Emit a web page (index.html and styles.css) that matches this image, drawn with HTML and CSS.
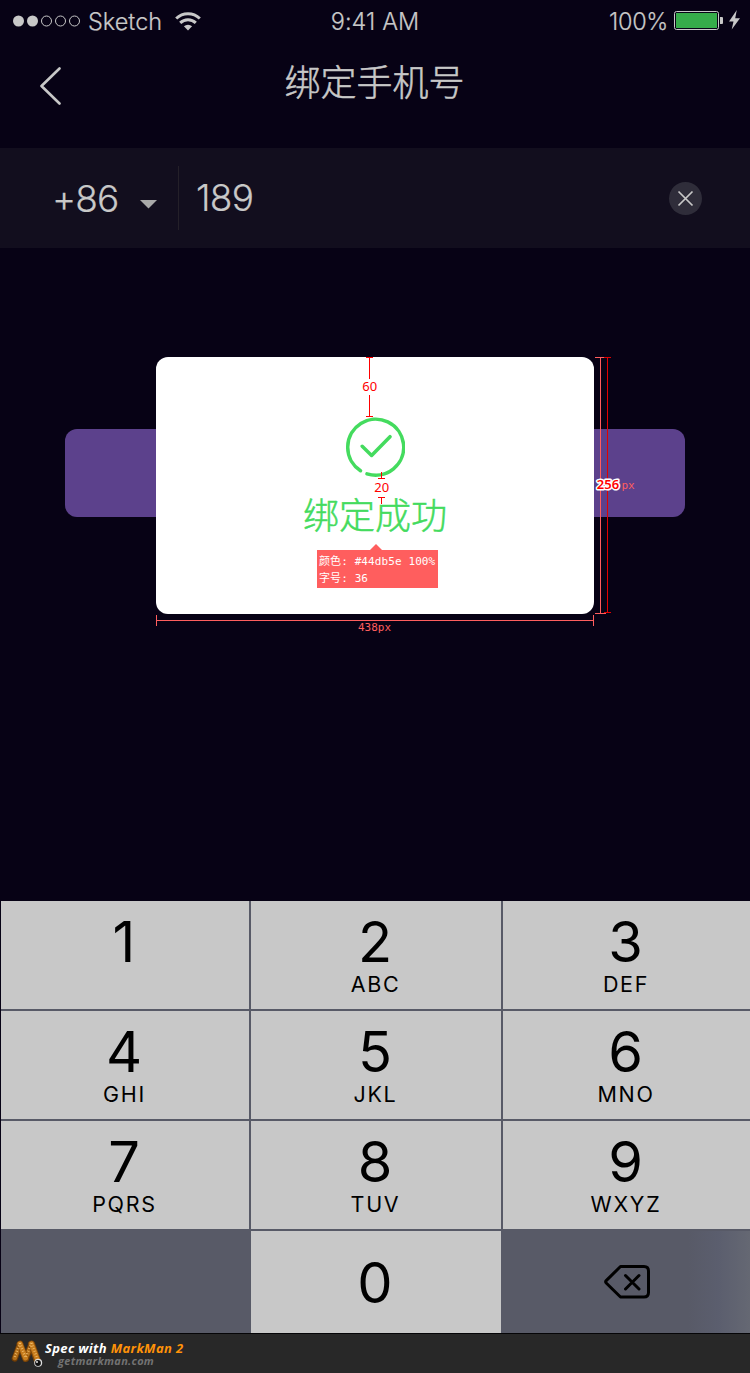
FILE: index.html
```html
<!DOCTYPE html>
<html lang="zh-CN">
<head>
<meta charset="utf-8">
<title>绑定手机号</title>
<link rel="stylesheet" href="styles.css">
</head>
<body>
<div class="screen">
  <header class="status">
    <div class="status-left">
      <svg class="signal" width="68" height="12" viewBox="0 0 68 12"><g fill="#c8c8c8"><circle cx="6.5" cy="6" r="5.5"/><circle cx="20.5" cy="6" r="5.5"/></g><g fill="none" stroke="#c8c8c8"><circle cx="34.5" cy="6" r="5"/><circle cx="48.5" cy="6" r="5"/><circle cx="62.5" cy="6" r="5"/></g></svg>
      <span class="carrier">Sketch</span>
      <svg class="wifi" width="26" height="19" viewBox="0 0 26 19"><g fill="none" stroke="#c8c8c8" stroke-width="3"><path d="M1.2 6.5 A17 17 0 0 1 24.8 6.5"/><path d="M5.2 10.8 A11.2 11.2 0 0 1 20.8 10.8"/></g><path d="M13 18.4 L8.9 14.3 A6 6 0 0 1 17.1 14.3 Z" fill="#c8c8c8"/></svg>
    </div>
    <span class="clock">9:41 AM</span>
    <div class="status-right">
      <span class="percent">100%</span>
      <svg class="battery" width="67" height="22" viewBox="0 0 67 22"><rect x=".5" y="1.5" width="44" height="18" rx="2" fill="none" stroke="#c8c8c8"/><rect x="2" y="3" width="41" height="15" fill="#36ac4a"/><path d="M46 7h2q1 0 1 1v5q0 1-1 1h-2z" fill="#c8c8c8"/><path d="M62.8 0 L55 11.5 H59.5 L57.7 19.5 L66 8.3 H61.2 Z" fill="#c8c8c8"/></svg>
    </div>
  </header>
  <nav class="nav">
    <svg class="back" width="24" height="40" viewBox="0 0 24 40"><path d="M20.5 3.5 L2.5 21 L20.5 38.5" fill="none" stroke="#c8c8c8" stroke-width="2.6" stroke-linecap="round" stroke-linejoin="round"/></svg>
    <h1 class="title">绑定手机号</h1>
  </nav>
  <section class="phone">
    <span class="code">+86</span>
    <svg class="caret" width="18" height="9" viewBox="0 0 18 9"><path d="M0 0H17L8.5 8.5Z" fill="#a9a9a9"/></svg>
    <span class="number">189</span>
    <svg class="clear" width="34" height="34" viewBox="0 0 34 34"><circle cx="17.5" cy="17.5" r="16.5" fill="#2f2d3a"/><path d="M10.5 10.5 L24.5 24.5 M24.5 10.5 L10.5 24.5" stroke="#c8c8c8" stroke-width="1.7"/></svg>
  </section>
  <main class="content">
    <div class="submit"></div>
  </main>
  <section class="keypad">
    <div class="key"><b>1</b></div>
    <div class="key"><b>2</b><span>ABC</span></div>
    <div class="key"><b>3</b><span>DEF</span></div>
    <div class="key"><b>4</b><span>GHI</span></div>
    <div class="key"><b>5</b><span>JKL</span></div>
    <div class="key"><b>6</b><span>MNO</span></div>
    <div class="key"><b>7</b><span>PQRS</span></div>
    <div class="key"><b>8</b><span>TUV</span></div>
    <div class="key"><b>9</b><span>WXYZ</span></div>
    <div class="key blank"></div>
    <div class="key zero"><b>0</b></div>
    <div class="key delete"><svg width="47" height="36" viewBox="0 0 47 36"><path d="M16.5 2.5H40Q44.5 2.5 44.5 7V28.5Q44.5 33 40 33H16.5L2.2 19Q1 17.8 2.2 16.6Z M21.5 11.5L35 25M35 11.5L21.5 25" fill="none" stroke="#000" stroke-width="3" stroke-linecap="round" stroke-linejoin="round"/></svg></div>
  </section>
  <footer class="footer">
    <svg class="logo" width="32" height="28" viewBox="0 0 32 28"><g fill="none" stroke-linecap="round"><path d="M9 4L3.8 18.5" stroke="#6b3a06" stroke-width="6.4"/><path d="M20.5 4L15 18.5" stroke="#6b3a06" stroke-width="6.4"/><path d="M3.8 18L9 4M15 18L20.5 4" stroke="#b06c17" stroke-width="4.6"/><path d="M9 4L14.5 18.5" stroke="#7e470a" stroke-width="6.6"/><path d="M20.5 4L26.5 21" stroke="#7e470a" stroke-width="7"/><path d="M9 3.8L14.5 18M20.5 3.8L26.5 20" stroke="#c67c1d" stroke-width="5"/><path d="M9 3L3.8 17M9 3L14.5 18M20.5 3L15 17M20.5 3L26.5 19" stroke="#efbc6b" stroke-width="2.4" stroke-dasharray=".8 2" stroke-linecap="butt"/></g><circle cx="27.2" cy="22.8" r="4" fill="#ddd"/><circle cx="27" cy="23" r="2.9" fill="#111"/><circle cx="26" cy="22" r=".9" fill="#fff"/></svg>
    <div class="brand"><div class="spec">Spec with <em>MarkMan 2</em></div><div class="site">getmarkman.com</div></div>
  </footer>

  <div class="dialog">
    <svg class="success" width="60" height="60" viewBox="0 0 60 60"><path d="M15.5 53.7A28 28 0 1 1 22 56.8M17.2 29.3L26.6 38.5L45 19.7" fill="none" stroke="#44db5e" stroke-width="3.5" stroke-linecap="round" stroke-linejoin="round"/></svg>
    <p class="message">绑定成功</p>
    <div class="tip"><div>颜色: #44db5e 100%</div><div>字号: 36</div></div>
  </div>
  <svg class="rulers" width="500" height="290" viewBox="150 350 500 290">
    <g fill="none" stroke="#ff5e5e"><path d="M156 620.5H594M156.5 615V626M593.5 615V626"/><path d="M600.5 357V613M595 357.5H606M595 613.5H606"/></g>
    <g fill="none" stroke="#e00000"><path d="M607.5 357V613M604 357.5H611M604 612.5H611"/><path d="M369.5 357V379M369.5 395V417M366 357.5H373M366 416.5H373" stroke="#f00"/><path d="M381.5 472V478M378 478.5H385M378 497.5H385M381.5 497V504" stroke="#f00"/></g>
    <text class="measure" x="369.7" y="391">60</text>
    <text class="measure" x="381.7" y="492">20</text>
    <text class="unit" x="358" y="631">438px</text>
    <text class="unit" x="621.5" y="489">px</text>
    <text class="measure halo" x="608" y="489">256</text>
  </svg>
</div>
</body>
</html>
```
FILE: styles.css
```css
* { box-sizing: border-box; }
body { margin: 0; background: #070215; font-family: Inter, "Noto Sans CJK SC", sans-serif; }
.screen { position: relative; width: 750px; height: 1373px; display: flex; flex-direction: column; color: #c8c8c8; overflow: hidden; white-space: nowrap; }
svg { display: block; flex: none; }

.status { display: grid; grid-template-columns: 1fr auto 1fr; height: 42px; padding: 0 12px 2px 12px; align-items: center; font-size: 23.5px; line-height: 40px; font-weight: 300; }
.status-left, .status-right { display: flex; align-items: center; }
.status-right { justify-content: flex-end; gap: 6px; margin-right: -3px; }
.carrier { margin-left: 8px; padding-top: 2px; -webkit-text-stroke: .2px #c8c8c8; }
.wifi { margin-left: 13px; }
.clock { padding-top: 2px; letter-spacing: .1px; -webkit-text-stroke: .2px #c8c8c8; }
.percent { padding-top: 2px; letter-spacing: -.35px; -webkit-text-stroke: .2px #c8c8c8; }

.nav { display: grid; grid-template-columns: 1fr auto 1fr; height: 106px; padding: 0 40px 0 39px; }
.nav::after { content: ""; }
.back { margin-top: 23px; }
.title { margin: 12px 0 0; font-family: "Noto Sans CJK SC", sans-serif; font-size: 36px; line-height: 52px; font-weight: 300; -webkit-text-stroke: .5px #c8c8c8; }

.phone { display: flex; align-items: center; height: 100px; padding: 0 48px 0 52px; background: #120e1e; font-size: 37px; font-weight: 300; }
.code { width: 88px; letter-spacing: -.9px; -webkit-text-stroke: .2px #c8c8c8; }
.caret { margin-top: 12px; }
.number { flex: 1; margin-left: 20px; padding-left: 17px; line-height: 64px; border-left: 1px solid #242029; letter-spacing: -.7px; -webkit-text-stroke: .2px #c8c8c8; }

.content { height: 653px; padding: 181px 65px 0; }
.submit { height: 88px; border-radius: 12px; background: #5c418c; }

.keypad { display: grid; grid-template-columns: 248px 250px 247px; grid-template-rows: 108px 108px 108px 102px; gap: 2px; width: 749px; height: 432px; margin-left: 1px; background: #585a67; color: #000; }
.key { display: flex; flex-direction: column; align-items: center; padding: 10px 2px 0 0; background: #c8c8c8; }
.key b { font-size: 56px; line-height: 62px; font-weight: 400; }
.key span { font-size: 21.5px; line-height: 22px; letter-spacing: 1.7px; padding-left: 1px; }
.zero { padding-top: 21px; }
.blank { background: #585a67; }
.delete { padding: 33px 0 0 1px; background: linear-gradient(90deg, #585a67 75%, #5b5e6e 87%, #656873 100%); }

.footer { display: flex; height: 40px; padding-left: 11px; border-top: 1px solid #050507; background: #282828; font-family: "Open Sans", sans-serif; font-style: italic; font-weight: 700; }
.logo { margin-top: 6px; }
.brand { padding: 6px 0 0 2px; }
.spec { font-size: 13px; line-height: 16px; letter-spacing: .35px; color: #fff; }
.spec em { color: #ff9208; }
.site { padding-left: 13px; font-size: 11px; line-height: 10px; letter-spacing: .3px; color: #727272; }

.dialog { position: absolute; left: 156px; top: 357px; width: 438px; height: 257px; border-radius: 12px; background: #fff; display: flex; flex-direction: column; align-items: center; padding-top: 60px; }
.message { margin: 11px 0 0; font-family: "Noto Sans CJK SC", sans-serif; font-size: 36px; line-height: 50px; font-weight: 300; color: #44db5e; -webkit-text-stroke: .5px #44db5e; }
.tip { width: 121px; height: 38px; margin: 12px 0 0 5px; padding: 3px 2px; background: #ff5e5e; color: #fff; font-family: "DejaVu Sans Mono", "Noto Sans CJK SC", monospace; font-size: 11px; line-height: 17px; letter-spacing: .1px; position: relative; }
.tip::before { content: ""; position: absolute; left: 53px; top: -6px; border: 6px solid transparent; border-top: 0; border-bottom-color: #ff5e5e; }

.rulers { position: absolute; left: 150px; top: 350px; }
.measure { font: 13px "Noto Sans", sans-serif; fill: #f00; text-anchor: middle; }
.halo { font-weight: 600; stroke: #fff; stroke-width: 3px; paint-order: stroke; stroke-linejoin: round; }
.unit { font: 11px "DejaVu Sans Mono", monospace; fill: #ff5e5e; }
```
